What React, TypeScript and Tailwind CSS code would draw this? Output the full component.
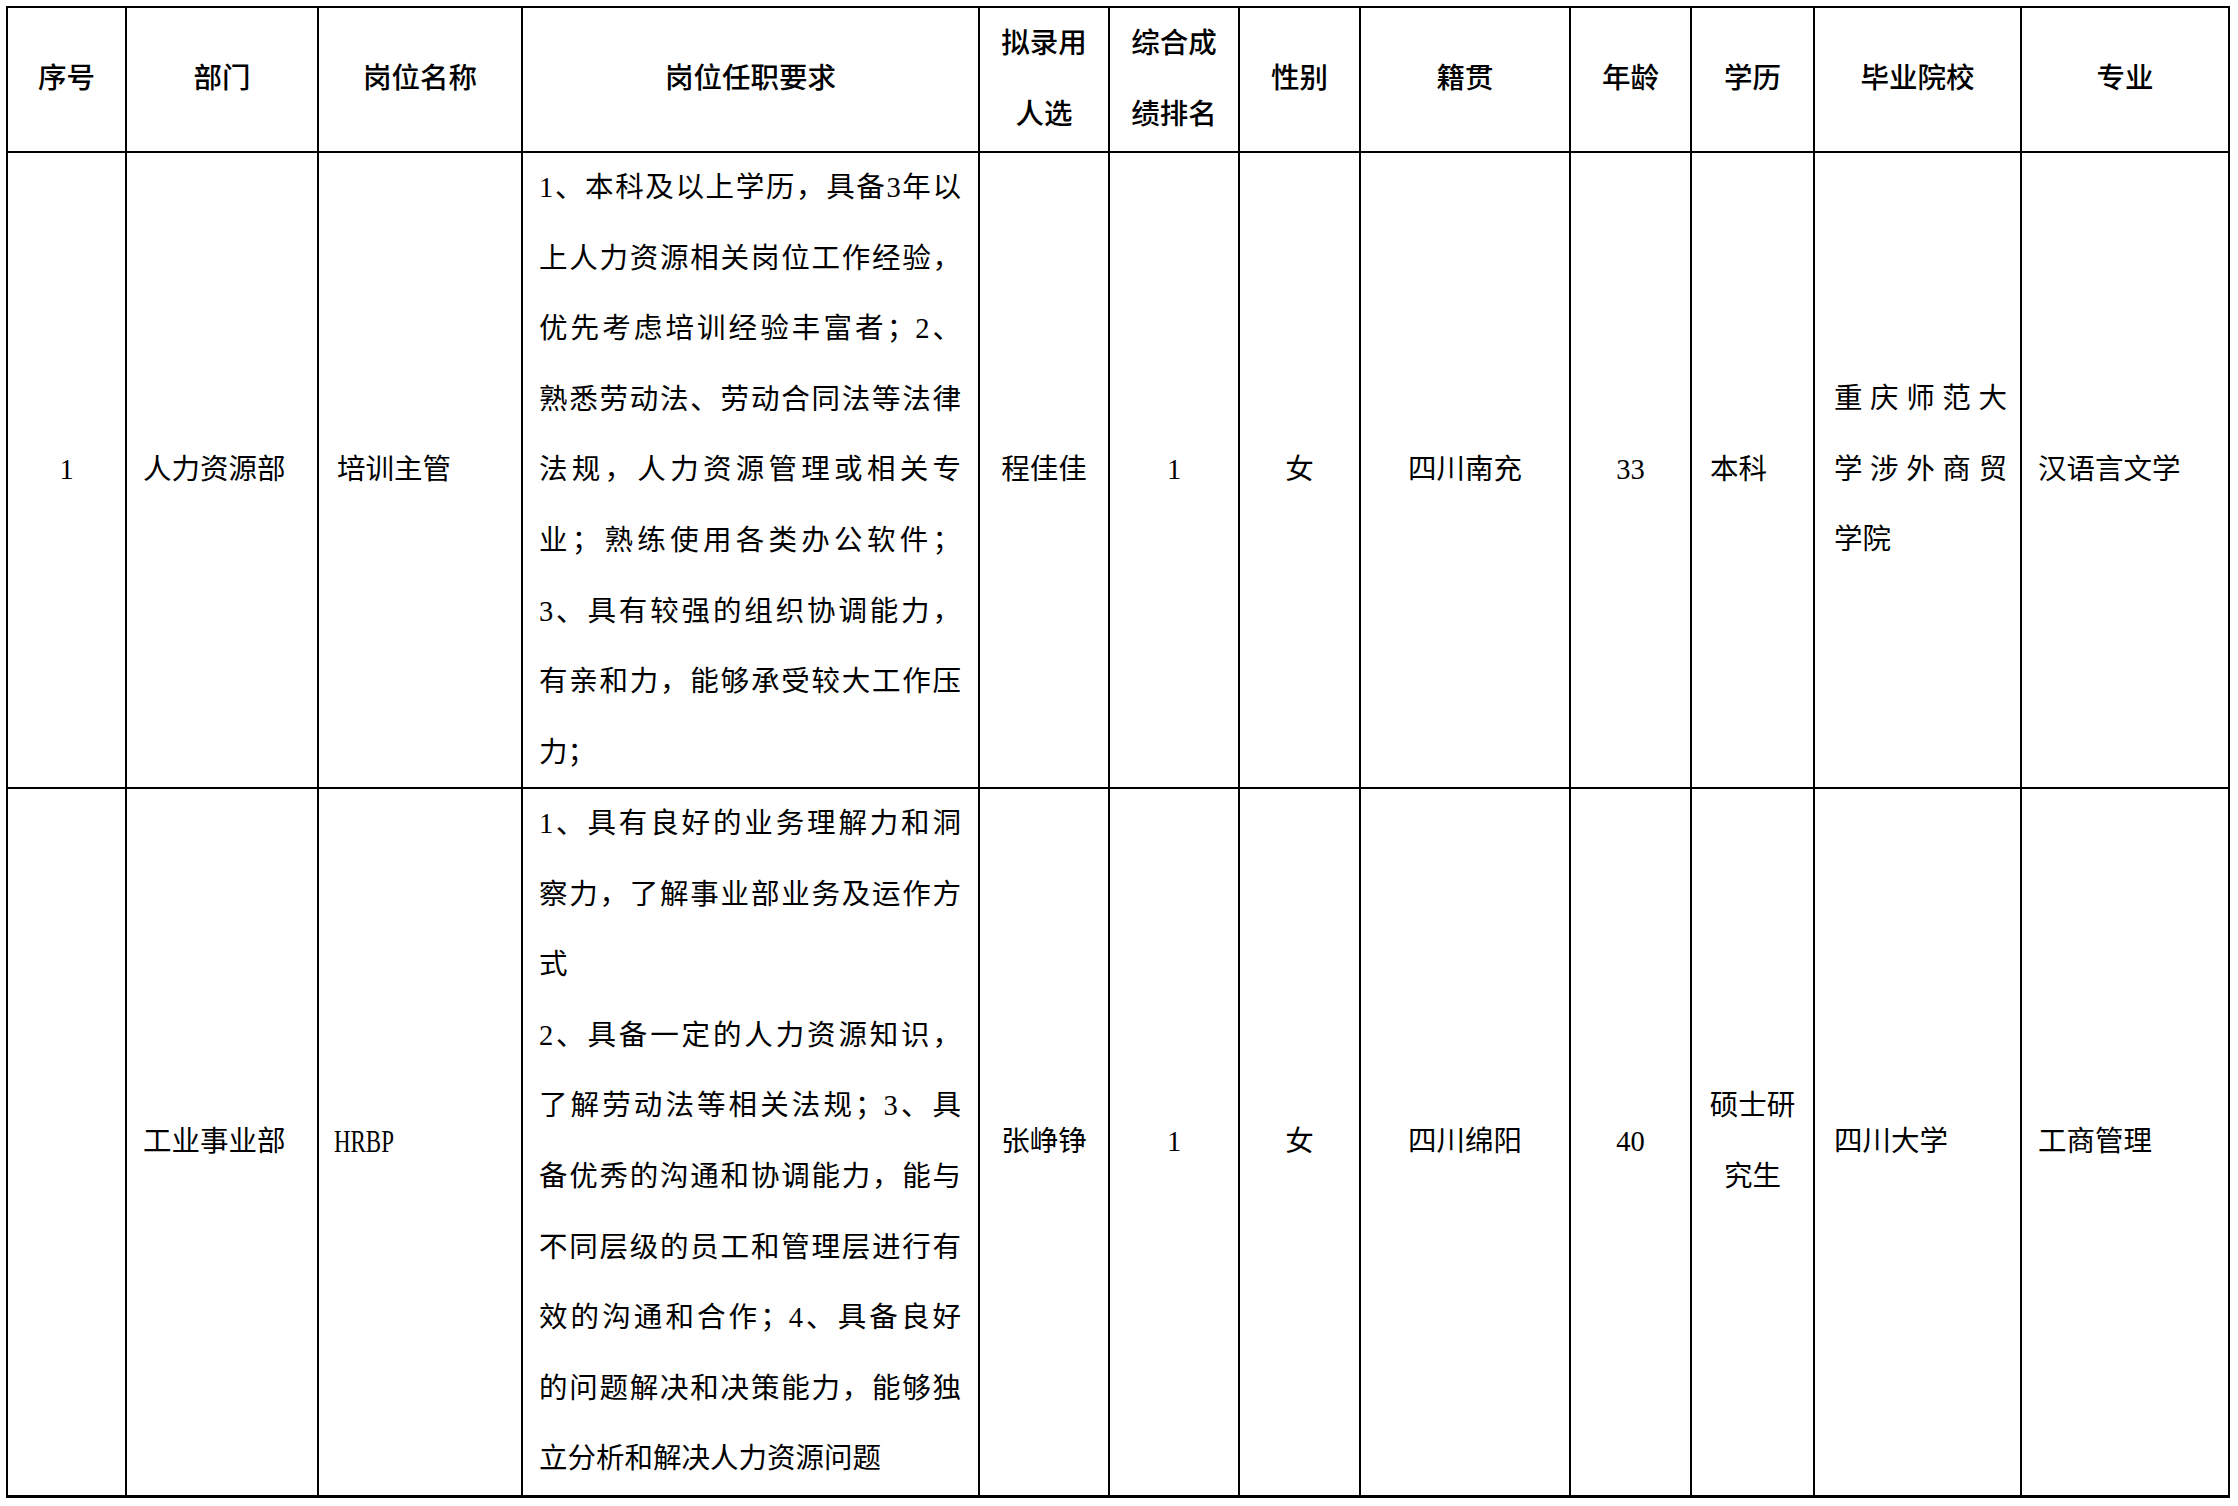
import React from "react";

// one line of the requirements text; spread lines are justified edge to edge
type Line = { t: string; spread?: boolean };

const row1Req: Line[] = [
  { t: "1、本科及以上学历，具备3年以", spread: true },
  { t: "上人力资源相关岗位工作经验，", spread: true },
  { t: "优先考虑培训经验丰富者；2、", spread: true },
  { t: "熟悉劳动法、劳动合同法等法律", spread: true },
  { t: "法规，人力资源管理或相关专", spread: true },
  { t: "业；熟练使用各类办公软件；", spread: true },
  { t: "3、具有较强的组织协调能力，", spread: true },
  { t: "有亲和力，能够承受较大工作压", spread: true },
  { t: "力；" },
];

const row2Req: Line[] = [
  { t: "1、具有良好的业务理解力和洞", spread: true },
  { t: "察力，了解事业部业务及运作方", spread: true },
  { t: "式" },
  { t: "2、具备一定的人力资源知识，", spread: true },
  { t: "了解劳动法等相关法规；3、具", spread: true },
  { t: "备优秀的沟通和协调能力，能与", spread: true },
  { t: "不同层级的员工和管理层进行有", spread: true },
  { t: "效的沟通和合作；4、具备良好", spread: true },
  { t: "的问题解决和决策能力，能够独", spread: true },
  { t: "立分析和解决人力资源问题" },
];

const school1: Line[] = [
  { t: "重庆师范大", spread: true },
  { t: "学涉外商贸", spread: true },
  { t: "学院" },
];

function Lines({ lines }: { lines: Line[] }) {
  return (
    <div className="w-full">
      {lines.map((l, i) =>
        l.spread ? (
          <div key={i} className="text-justify [text-align-last:justify]">
            {l.t}
          </div>
        ) : (
          <div key={i} className="text-left">
            {l.t}
          </div>
        )
      )}
    </div>
  );
}

function Head({ children }: { children: React.ReactNode }) {
  return (
    <div className="bg-white flex items-center justify-center text-center font-medium">
      <div>{children}</div>
    </div>
  );
}

export default function App() {
  return (
    <div
      className="min-h-screen w-full bg-white text-black text-[28.5px] leading-[70.6px]"
      style={{ fontFamily: "'Liberation Serif', 'Noto Sans CJK SC', serif" }}
    >
      <div className="ml-[6px] pt-[6px]">
        <div className="grid w-[2224px] grid-cols-[117px_190px_202px_455px_128px_128px_119px_208px_119px_121px_205px_206px] grid-rows-[143px_634px_706px] gap-[2px] bg-black p-[2px] pb-[3px]">
          {/* ── header ───────────────────────────── */}
          <Head>序号</Head>
          <Head>部门</Head>
          <Head>岗位名称</Head>
          <Head>岗位任职要求</Head>
          <Head>
            <div>拟录用</div>
            <div>人选</div>
          </Head>
          <Head>
            <div>综合成</div>
            <div>绩排名</div>
          </Head>
          <Head>性别</Head>
          <Head>籍贯</Head>
          <Head>年龄</Head>
          <Head>学历</Head>
          <Head>毕业院校</Head>
          <Head>专业</Head>

          {/* ── row 1 ────────────────────────────── */}
          <div className="bg-white flex items-center justify-center">1</div>
          <div className="bg-white flex items-center pl-[16px]">人力资源部</div>
          <div className="bg-white flex items-center pl-[18px]">培训主管</div>
          <div className="bg-white flex items-start pl-[16px] pr-[17px]">
            <Lines lines={row1Req} />
          </div>
          <div className="bg-white flex items-center justify-center">程佳佳</div>
          <div className="bg-white flex items-center justify-center">1</div>
          <div className="bg-white flex items-center justify-center">女</div>
          <div className="bg-white flex items-center justify-center">四川南充</div>
          <div className="bg-white flex items-center justify-center">33</div>
          <div className="bg-white flex items-center pl-[18px]">本科</div>
          <div className="bg-white flex items-center pl-[19px] pr-[13px]">
            <Lines lines={school1} />
          </div>
          <div className="bg-white flex items-center pl-[16px]">汉语言文学</div>

          {/* ── row 2 ────────────────────────────── */}
          <div className="bg-white" />
          <div className="bg-white flex items-center pl-[16px]">工业事业部</div>
          <div className="bg-white flex items-center pl-[15px]">
            <span className="inline-block origin-left scale-x-[0.74] text-[31px]">HRBP</span>
          </div>
          <div className="bg-white flex items-start pl-[16px] pr-[17px]">
            <Lines lines={row2Req} />
          </div>
          <div className="bg-white flex items-center justify-center">张峥铮</div>
          <div className="bg-white flex items-center justify-center">1</div>
          <div className="bg-white flex items-center justify-center">女</div>
          <div className="bg-white flex items-center justify-center">四川绵阳</div>
          <div className="bg-white flex items-center justify-center">40</div>
          <div className="bg-white flex items-center justify-center text-center">
            <div>
              <div>硕士研</div>
              <div>究生</div>
            </div>
          </div>
          <div className="bg-white flex items-center pl-[19px]">四川大学</div>
          <div className="bg-white flex items-center pl-[16px]">工商管理</div>
        </div>
      </div>
    </div>
  );
}
